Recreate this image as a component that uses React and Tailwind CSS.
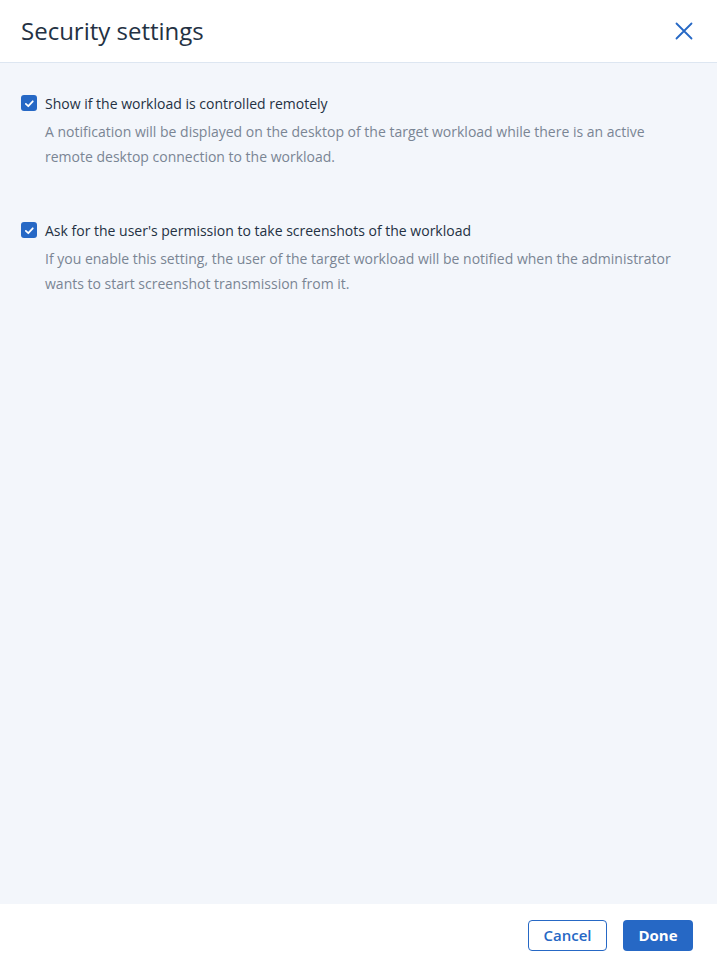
const settings = [
  {
    label: 'Show if the workload is controlled remotely',
    description:
      'A notification will be displayed on the desktop of the target workload while there is an active remote desktop connection to the workload.',
  },
  {
    label: "Ask for the user's permission to take screenshots of the workload",
    description:
      'If you enable this setting, the user of the target workload will be notified when the administrator wants to start screenshot transmission from it.',
  },
];

const CheckIcon = () => (
  <div className="w-4 h-4 rounded-[3px] bg-[#2668c5] flex items-center justify-center flex-shrink-0">
    <svg viewBox="0 0 16 16" className="w-[13px] h-[13px]" fill="none" stroke="white" strokeWidth={2.2} strokeLinecap="round" strokeLinejoin="round">
      <path d="M3.5 8.5l3 2.8 5.5-6" />
    </svg>
  </div>
);

export default function App() {
  return (
    <div className="h-screen flex flex-col bg-white text-[#243143]" style={{ fontFamily: '"Open Sans", "Noto Sans", sans-serif' }}>
      {/* Header */}
      <div className="h-[63px] flex items-center justify-between pl-[21px] pr-[24px] border-b border-[#dde6f1] flex-shrink-0">
        <h1 className="text-[24px] leading-8 text-[#243143]">Security settings</h1>
        <button className="text-[#2668c5]">
          <svg viewBox="0 0 18 18" className="w-[18px] h-[18px]" fill="none" stroke="currentColor" strokeWidth={1.8} strokeLinecap="round">
            <path d="M1.5 1.5l15 15M16.5 1.5l-15 15" />
          </svg>
        </button>
      </div>

      {/* Body */}
      <div className="flex-1 bg-[#f3f6fb] pt-[28px] pl-[21px] pr-6 flex flex-col gap-[49px]">
        {settings.map((s) => (
          <div key={s.label} className="flex flex-col">
            <div className="flex items-center gap-2 h-6">
              <CheckIcon />
              <span className="text-[14px] text-[#243143]">{s.label}</span>
            </div>
            <p className="mt-1 ml-6 text-[14px] leading-[25px] text-[#7a8594]">{s.description}</p>
          </div>
        ))}
      </div>

      {/* Footer */}
      <div className="h-[62px] flex items-center justify-end gap-4 pr-6 flex-shrink-0">
        <button className="h-[31px] w-[79px] rounded-[4px] border border-[#2668c5] text-[#2668c5] text-[15px] font-semibold">
          Cancel
        </button>
        <button className="h-[31px] w-[70px] rounded-[4px] bg-[#2668c5] text-white text-[15px] font-bold">
          Done
        </button>
      </div>
    </div>
  );
}
